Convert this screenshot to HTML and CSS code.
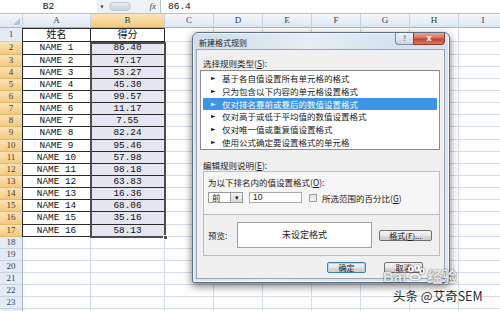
FILE: index.html
```html
<!DOCTYPE html>
<html lang="zh">
<head>
  <meta charset="UTF-8" />
  <title>新建格式规则</title>
  <link rel="stylesheet" href="styles.css">
</head>
<body>
  <!-- 编辑栏 -->
  <div class="formula-bar">
    <div class="name-box">B2</div>
    <div class="name-arrow">▾</div>
    <div class="fx-area"><span class="fx-bubble"></span><span class="fx">fx</span></div>
    <div class="formula">86.4</div>
  </div>

  <!-- 工作表 -->
  <div class="sheet">
    <div class="hdr">
      <span class="corner"></span>
      <span class="ch wa">A</span>
      <span class="ch wb on">B</span>
      <span class="ch">C</span><span class="ch">D</span><span class="ch">E</span><span class="ch">F</span>
      <span class="ch">G</span><span class="ch">H</span><span class="ch">I</span>
    </div>
    <div class="row r1"><span class="rh">1</span><span class="ca tb">姓名</span><span class="cb tb">得分</span><span class="rest"></span></div>
    <div class="row"><span class="rh on">2</span><span class="ca tb">NAME 1</span><span class="cb tb sel">86.40</span><span class="rest"></span></div>
    <div class="row"><span class="rh on">3</span><span class="ca tb">NAME 2</span><span class="cb tb sel">47.17</span><span class="rest"></span></div>
    <div class="row"><span class="rh on">4</span><span class="ca tb">NAME 3</span><span class="cb tb sel">53.27</span><span class="rest"></span></div>
    <div class="row"><span class="rh on">5</span><span class="ca tb">NAME 4</span><span class="cb tb sel">45.30</span><span class="rest"></span></div>
    <div class="row"><span class="rh on">6</span><span class="ca tb">NAME 5</span><span class="cb tb sel">99.57</span><span class="rest"></span></div>
    <div class="row"><span class="rh on">7</span><span class="ca tb">NAME 6</span><span class="cb tb sel">11.17</span><span class="rest"></span></div>
    <div class="row"><span class="rh on">8</span><span class="ca tb">NAME 7</span><span class="cb tb sel">7.55</span><span class="rest"></span></div>
    <div class="row"><span class="rh on">9</span><span class="ca tb">NAME 8</span><span class="cb tb sel">82.24</span><span class="rest"></span></div>
    <div class="row"><span class="rh on">10</span><span class="ca tb">NAME 9</span><span class="cb tb sel">95.46</span><span class="rest"></span></div>
    <div class="row"><span class="rh on">11</span><span class="ca tb">NAME 10</span><span class="cb tb sel">57.98</span><span class="rest"></span></div>
    <div class="row"><span class="rh on">12</span><span class="ca tb">NAME 11</span><span class="cb tb sel">98.18</span><span class="rest"></span></div>
    <div class="row"><span class="rh on">13</span><span class="ca tb">NAME 12</span><span class="cb tb sel">63.83</span><span class="rest"></span></div>
    <div class="row"><span class="rh on">14</span><span class="ca tb">NAME 13</span><span class="cb tb sel">16.36</span><span class="rest"></span></div>
    <div class="row"><span class="rh on">15</span><span class="ca tb">NAME 14</span><span class="cb tb sel">68.06</span><span class="rest"></span></div>
    <div class="row"><span class="rh on">16</span><span class="ca tb">NAME 15</span><span class="cb tb sel">35.16</span><span class="rest"></span></div>
    <div class="row"><span class="rh on">17</span><span class="ca tb">NAME 16</span><span class="cb tb sel">58.13</span><span class="rest"></span></div>
    <div class="row"><span class="rh">18</span><span class="ca"></span><span class="cb"></span><span class="rest"></span></div>
    <div class="row"><span class="rh">19</span><span class="ca"></span><span class="cb"></span><span class="rest"></span></div>
    <div class="row"><span class="rh">20</span><span class="ca"></span><span class="cb"></span><span class="rest"></span></div>
    <div class="row"><span class="rh">21</span><span class="ca"></span><span class="cb"></span><span class="rest"></span></div>
    <div class="row"><span class="rh">22</span><span class="ca"></span><span class="cb"></span><span class="rest"></span></div>
    <div class="row"><span class="rh">23</span><span class="ca"></span><span class="cb"></span><span class="rest"></span></div>
    <div class="row"><span class="rh"></span><span class="ca"></span><span class="cb"></span><span class="rest"></span></div>
  </div>

  <!-- 选区框 -->
  <div class="selection"><span class="handle"></span></div>

  <!-- 新建格式规则 对话框 -->
  <div class="dialog">
    <div class="titlebar">
      <span class="title">新建格式规则</span>
      <span class="btn-help">?</span>
      <span class="btn-close">x</span>
    </div>
    <div class="client">
      <div class="label">选择规则类型(<u>S</u>):</div>
      <div class="listbox">
        <div class="item"><span class="tri">►</span>基于各自值设置所有单元格的格式</div>
        <div class="item"><span class="tri">►</span>只为包含以下内容的单元格设置格式</div>
        <div class="item active"><span class="tri">►</span>仅对排名靠前或靠后的数值设置格式</div>
        <div class="item"><span class="tri">►</span>仅对高于或低于平均值的数值设置格式</div>
        <div class="item"><span class="tri">►</span>仅对唯一值或重复值设置格式</div>
        <div class="item"><span class="tri">►</span>使用公式确定要设置格式的单元格</div>
      </div>
      <div class="label label-desc">编辑规则说明(<u>E</u>):</div>
      <div class="desc">
        <div class="desc-top">
          <div class="desc-title">为以下排名内的值设置格式(<u>O</u>):</div>
          <div class="controls">
            <div class="combo"><span class="combo-val">前</span><span class="combo-btn">▾</span></div>
            <div class="input">10</div>
            <span class="check"></span>
            <span class="check-label">所选范围的百分比(<u>G</u>)</span>
          </div>
        </div>
        <div class="desc-bottom">
          <span class="preview-label">预览:</span>
          <div class="preview">未设定格式</div>
          <div class="button btn-format">格式(<u>F</u>)...</div>
        </div>
      </div>
      <div class="actions">
        <div class="button">确定</div>
        <div class="button">取消</div>
      </div>
    </div>
  </div>

  <!-- 水印 -->
  <div class="wm-baidu">Bai<svg class="paw" width="20" height="16" viewBox="0 0 20 16"><g fill="none" stroke="#fff" stroke-width="1.6"><ellipse cx="5" cy="4" rx="2" ry="2.5"/><ellipse cx="11" cy="3" rx="2" ry="2.5"/><ellipse cx="16" cy="6" rx="2" ry="2.3"/><path d="M4 13 C5 8, 12 7, 14 13 C12 15, 6 15, 4 13 Z"/></g></svg>经验</div>
  <div class="wm-text">头条 @艾奇SEM</div>
</body>
</html>
```

FILE: styles.css
```css
:root {
  --grid-line: #d5dce6;
  --hdr-line: #9eb6ce;
  --hdr-bg: linear-gradient(#f5f8fc, #dde6f1);
  --hdr-on: linear-gradient(#fbe3b8, #f4c97f);
  --ui-font: "Noto Sans CJK SC", "Noto Sans", sans-serif;
}
* { box-sizing: border-box; margin: 0; padding: 0; }
body {
  width: 500px;
  height: 311px;
  overflow: hidden;
  background: #fff;
  font-family: "Liberation Mono", "Noto Sans CJK SC", monospace;
  color: #111;
  position: relative;
}

/* 编辑栏 */
.formula-bar {
  height: 14px;
  display: flex;
  background: #eef2f7;
  border-bottom: 1px solid #b3c3d6;
  font-family: "Liberation Mono", monospace;
  font-size: 9.5px;
  line-height: 13px;
}
.name-box {
  width: 97px;
  background: #fff;
  text-align: center;
}
.name-arrow {
  width: 10px;
  font-size: 8px;
  text-align: center;
  color: #333;
}
.fx-area {
  width: 54px;
  display: flex;
  align-items: center;
  justify-content: space-between;
  padding: 0 4px 0 2px;
  border-right: 1px solid #b3c3d6;
}
.fx-bubble {
  width: 22px;
  height: 9px;
  border-radius: 5px;
  background: linear-gradient(#e9edf2, #c9d1dc);
  border: 1px solid #c0c8d3;
}
.fx {
  font-family: "Liberation Serif", serif;
  font-style: italic;
  font-size: 9px;
  color: #444;
}
.formula {
  flex: 1;
  background: #fff;
  padding-left: 7px;
}

/* 工作表 */
.sheet { font-size: 9.4px; }
.hdr {
  display: flex;
  height: 14px;
  line-height: 13px;
}
.corner, .ch {
  background: var(--hdr-bg);
  border-right: 1px solid #c5d3e2;
  border-bottom: 1px solid var(--hdr-line);
}
.corner { width: 23px; flex: none; position: relative; }
.corner::after {
  content: "";
  position: absolute;
  right: 2px;
  bottom: 2px;
  border-left: 7px solid transparent;
  border-bottom: 7px solid #b7c6d6;
}
.ch {
  width: 49px;
  flex: none;
  text-align: center;
  font-family: "Liberation Serif", serif;
  font-size: 9px;
  color: #2f3d52;
}
.ch.wa { width: 68px; }
.ch.wb { width: 74px; }
.ch.on { background: var(--hdr-on); border-bottom-color: #d6a552; }

.row {
  display: flex;
  height: 12.15px;
  line-height: 11px;
}
.row.r1 { height: 14.4px; line-height: 13px; font-size: 10px; }
.rh {
  width: 23px;
  flex: none;
  text-align: center;
  background: #e4ebf4;
  border-right: 1px solid var(--hdr-line);
  border-bottom: 1px solid #c6d3e1;
  font-family: "Liberation Serif", serif;
  font-size: 9px;
  color: #33435a;
}
.rh.on { background: var(--hdr-on); border-right-color: #d6a552; border-bottom-color: #e5b96b; color: #4a3a22; }
.ca, .cb {
  flex: none;
  text-align: center;
  border-right: 1px solid var(--grid-line);
  border-bottom: 1px solid var(--grid-line);
  white-space: pre;
}
.ca { width: 68px; }
.cb { width: 74px; }
.tb { border-right-color: #2a2a2a; border-bottom-color: #2a2a2a; }
.ca.tb { border-left: 1px solid #2a2a2a; margin-left: -1px; width: 69px; }
.row.r1 .tb { border-top: 1px solid #2a2a2a; }
.sel { background: #e5e6f1; }
.rest {
  flex: 1;
  border-bottom: 1px solid var(--grid-line);
  background: repeating-linear-gradient(to right, transparent 0 48px, var(--grid-line) 48px 49px);
}

.selection {
  position: absolute;
  left: 90px;
  top: 41.6px;
  width: 76px;
  height: 196px;
  border: 2px solid #4d4d4d;
}
.handle {
  position: absolute;
  right: -4px;
  bottom: -4px;
  width: 5px;
  height: 5px;
  background: #4d4d4d;
  border: 1px solid #fff;
}

/* 对话框 */
.dialog {
  position: absolute;
  left: 192px;
  top: 32px;
  width: 258px;
  height: 251px;
  display: flex;
  flex-direction: column;
  background: linear-gradient(100deg, #cfdcea 0%, #e6eef7 40%, #d4e1ee 70%, #dfe8f2 100%);
  border: 1px solid #5f6f83;
  border-radius: 6px 6px 2px 2px;
  box-shadow: 0 3px 9px rgba(0, 0, 0, 0.55), inset 0 0 0 1px rgba(255, 255, 255, 0.7);
  font-family: var(--ui-font);
  font-size: 8.5px;
  color: #1b1b1b;
}
.titlebar {
  height: 16px;
  display: flex;
  align-items: flex-start;
  padding-right: 4px;
}
.title {
  flex: 1;
  font-size: 8px;
  line-height: 20px;
  padding-left: 6px;
  color: #222;
}
.btn-help, .btn-close {
  height: 12px;
  line-height: 11px;
  text-align: center;
  border: 1px solid #7b8a9c;
  border-top: none;
}
.btn-help {
  width: 18px;
  background: linear-gradient(#eef2f6, #cdd6e0);
  border-radius: 0 0 0 4px;
  border-right: none;
  font-size: 7px;
  color: #555;
}
.btn-close {
  width: 32px;
  background: linear-gradient(#e9a691 0%, #d3705d 45%, #c0432f 55%, #d97a63 100%);
  border-color: #8e3a2c;
  border-radius: 0 0 4px 0;
  color: #fff;
  font-family: "DejaVu Sans", sans-serif;
  font-weight: bold;
  font-size: 8px;
}
.client {
  flex: 1;
  margin: 0 4px 3px 3px;
  background: #f0f0f0;
  border: 1px solid #9aa6b4;
  display: flex;
  flex-direction: column;
}
u { text-decoration: underline; text-underline-offset: 1px; }
.label {
  margin: 8px 0 0 6px;
  line-height: 10px;
}
.label-desc { margin-top: 10px; }
.listbox {
  margin: 2px 0 0 3px;
  width: 240px;
  height: 80px;
  background: #fff;
  border: 1px solid #8c8c8c;
  padding-top: 1px;
}
.item {
  height: 12.8px;
  line-height: 12.8px;
  margin: 0 2px;
  padding-left: 8px;
  white-space: nowrap;
  overflow: hidden;
}
.item.active { background: #3d95ea; color: #fff; }
.tri {
  display: inline-block;
  width: 11px;
  font-size: 6px;
  font-family: "DejaVu Sans", sans-serif;
  vertical-align: top;
}
.desc {
  margin: 1px 0 0 6px;
  width: 237px;
}
.desc-top {
  height: 44px;
  background: #f6f6f6;
  border: 1px solid #bdbdbd;
  padding: 5px 0 0 4px;
}
.desc-title { line-height: 10px; }
.controls {
  margin-top: 5px;
  display: flex;
  align-items: center;
  height: 11px;
}
.combo {
  width: 35px;
  height: 11px;
  display: flex;
  background: #fff;
  border: 1px solid #9a9a9a;
}
.combo-val { flex: 1; line-height: 9px; padding-left: 3px; }
.combo-btn {
  width: 12px;
  font-size: 7px;
  line-height: 9px;
  text-align: center;
  background: linear-gradient(#f5f5f5, #d9d9d9);
  border-left: 1px solid #9a9a9a;
}
.input {
  width: 53px;
  height: 11px;
  margin-left: 6px;
  background: #fff;
  border: 1px solid #a9a9a9;
  line-height: 9px;
  padding-left: 3px;
  font-family: "Liberation Sans", sans-serif;
}
.check {
  width: 8px;
  height: 8px;
  margin-left: 7px;
  background: linear-gradient(#e3e3e3, #f8f8f8);
  border: 1px solid #a0a0a0;
}
.check-label { margin-left: 5px; white-space: nowrap; }
.desc-bottom {
  height: 41px;
  border: 1px solid #bdbdbd;
  border-top: none;
  display: flex;
  align-items: center;
  padding: 0 0 0 4px;
}
.preview-label { width: 29px; }
.preview {
  width: 135px;
  height: 26px;
  background: #fff;
  border: 1px solid #a0a0a0;
  text-align: center;
  line-height: 24px;
  font-size: 9px;
}
.button {
  width: 39px;
  height: 11px;
  line-height: 9px;
  text-align: center;
  background: linear-gradient(#f4f4f4 0%, #e8e8e8 50%, #d8d8d8 51%, #cfcfcf 100%);
  border: 1px solid #707070;
  border-radius: 2px;
  font-size: 8px;
}
.btn-format { width: 53px; margin-left: 7px; }
.actions {
  display: flex;
  justify-content: flex-end;
  gap: 18px;
  margin: 6px 21px 0 0;
}
.actions .button:first-child { border-color: #3c7fb1; box-shadow: inset 0 0 0 1px #a9dbf6; }

/* 水印 */
.wm-baidu {
  position: absolute;
  left: 383px;
  top: 265px;
  display: flex;
  align-items: flex-end;
  font-family: "Liberation Sans", "Noto Sans CJK SC", sans-serif;
  font-size: 15px;
  font-weight: bold;
  color: rgba(255, 255, 255, 0.9);
  text-shadow: 0 0 1px rgba(0, 0, 0, 0.6), 0 0 2px rgba(0, 0, 0, 0.35);
  line-height: 20px;
}
.wm-baidu .paw {
  margin: 0 1px 6px 0;
  filter: drop-shadow(0 0 1px rgba(0, 0, 0, 0.55));
}
.wm-text {
  position: absolute;
  left: 393px;
  top: 288px;
  font-family: "Noto Sans CJK SC", "Liberation Sans", sans-serif;
  font-size: 12.5px;
  line-height: 15px;
  color: #2a2a2a;
  text-shadow: 0 0 2px #fff, 0 0 2px #fff;
}
```
